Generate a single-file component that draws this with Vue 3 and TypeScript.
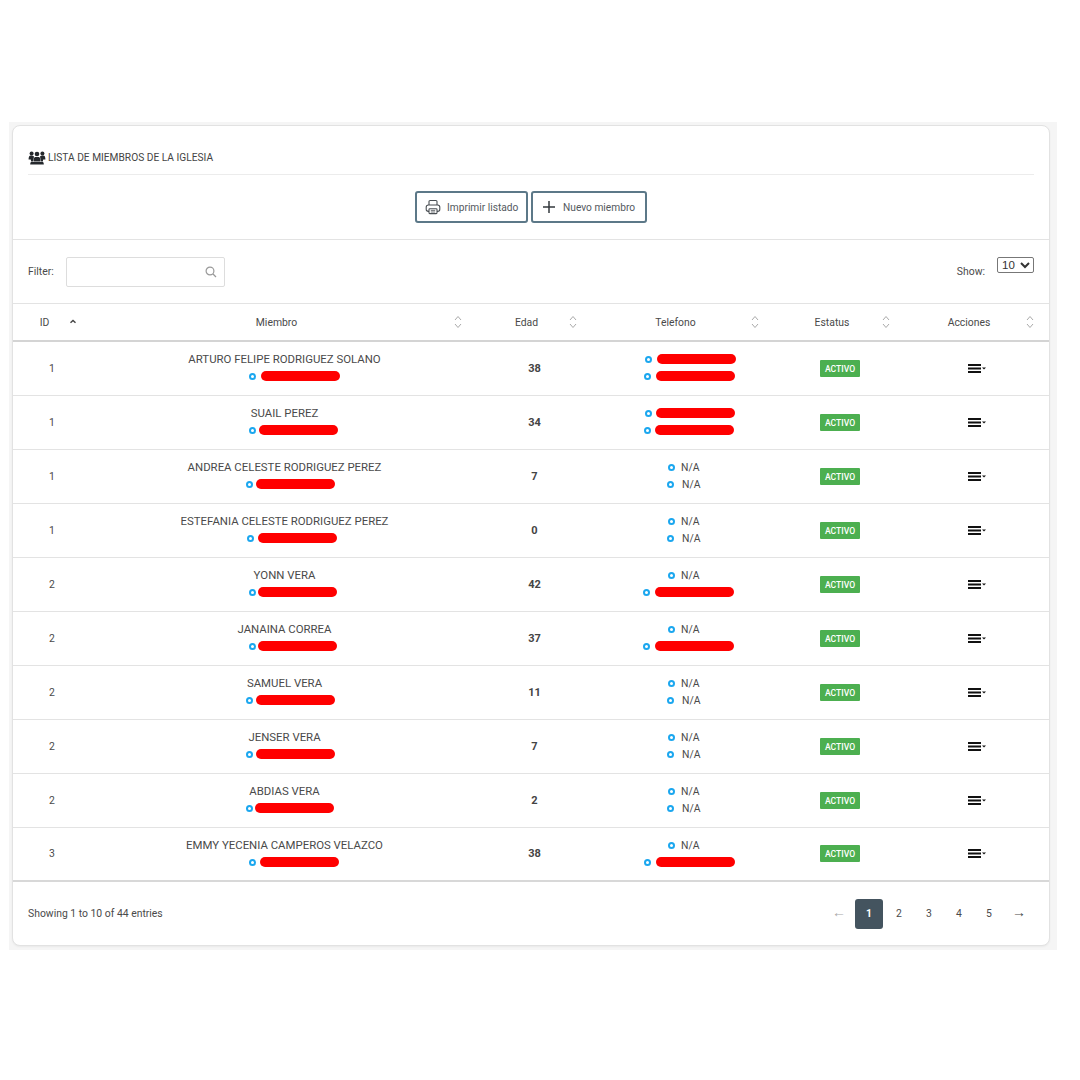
<script setup lang="ts">
interface Line { x: number; gap: number; text?: string }
interface Row { id: number; name: string; nameLine: Line; age: number; phones: Line[] }

const na1: Line = { x: 76, gap: 6, text: 'N/A' }
const na2: Line = { x: 75, gap: 8, text: 'N/A' }
const rows: Row[] = [
  { id: 1, name: 'ARTURO FELIPE RODRIGUEZ SOLANO', nameLine: { x: 157, gap: 5 }, age: 38, phones: [{ x: 53, gap: 5 }, { x: 52, gap: 5 }] },
  { id: 1, name: 'SUAIL PEREZ', nameLine: { x: 157, gap: 3 }, age: 34, phones: [{ x: 53, gap: 4 }, { x: 52, gap: 4 }] },
  { id: 1, name: 'ANDREA CELESTE RODRIGUEZ PEREZ', nameLine: { x: 154, gap: 3 }, age: 7, phones: [na1, na2] },
  { id: 1, name: 'ESTEFANIA CELESTE RODRIGUEZ PEREZ', nameLine: { x: 155, gap: 4 }, age: 0, phones: [na1, na2] },
  { id: 2, name: 'YONN VERA', nameLine: { x: 157, gap: 2 }, age: 42, phones: [na1, { x: 51, gap: 5 }] },
  { id: 2, name: 'JANAINA CORREA', nameLine: { x: 157, gap: 2 }, age: 37, phones: [na1, { x: 51, gap: 5 }] },
  { id: 2, name: 'SAMUEL VERA', nameLine: { x: 154, gap: 3 }, age: 11, phones: [na1, na2] },
  { id: 2, name: 'JENSER VERA', nameLine: { x: 154, gap: 3 }, age: 7, phones: [na1, na2] },
  { id: 2, name: 'ABDIAS VERA', nameLine: { x: 154, gap: 2 }, age: 2, phones: [na1, na2] },
  { id: 3, name: 'EMMY YECENIA CAMPEROS VELAZCO', nameLine: { x: 157, gap: 4 }, age: 38, phones: [na1, { x: 52, gap: 5 }] },
]
const columns = ['ID', 'Miembro', 'Edad', 'Telefono', 'Estatus', 'Acciones']
const pages = [1, 2, 3, 4, 5]
</script>

<template>
  <div class="backdrop">
    <section class="card">
      <header class="head">
        <h1 class="title">
          <svg class="group-icon" viewBox="0 0 18 14" width="18" height="14" fill="#24282c">
            <circle cx="3.6" cy="2.4" r="2" /><circle cx="14.4" cy="2.4" r="2" />
            <path d="M1.8 4.8C.9 5.4.6 6.6.6 8.6h2.2l.3 1.8h2L6 5.6C5.4 5 4.6 4.6 3.6 4.6c-.7 0-1.300.1-1.800.2z" />
            <path d="M16.200 4.800c.9.6 1.200 1.800 1.200 3.800h-2.200l-.3 1.800h-2L12 5.600c.6-.6 1.400-1 2.400-1 .7 0 1.300.1 1.800.2z" />
            <circle cx="9" cy="3" r="2.300" />
            <path d="M7 6h4c1 .5 1.400 1.800 1.500 4.600h-7C5.600 7.800 6 6.500 7 6z" />
            <path d="M3.500 11h11c.8 0 1.200.6 1.300 2.600H2.200C2.300 11.600 2.700 11 3.500 11z" />
          </svg>
          LISTA DE MIEMBROS DE LA IGLESIA
        </h1>
        <div class="actions">
          <button class="btn print" type="button">
            <svg viewBox="0 0 16 16" width="16" height="16" fill="none" stroke="#4a4f54" stroke-width="1.1">
              <path d="M4 6V2.600c0-.6.500-1.100 1.100-1.100h5.800c.6 0 1.100.5 1.100 1.100V6" />
              <rect x="1.200" y="6" width="13.600" height="6.400" rx="2.200" />
              <rect x="4" y="9.800" width="8" height="4.800" rx=".8" fill="#fff" />
              <path d="M5.800 11.400h4.400M5.800 13h4.400" stroke-width=".8" />
            </svg>
            <span>Imprimir listado</span>
          </button>
          <button class="btn add" type="button">
            <svg viewBox="0 0 14 14" width="14" height="14" stroke="#33383d" stroke-width="1.5">
              <path d="M7 1v12M1 7h12" />
            </svg>
            <span>Nuevo miembro</span>
          </button>
        </div>
      </header>

      <div class="controls">
        <label class="filter">
          <span>Filter:</span>
          <span class="search">
            <input type="text" aria-label="Filter" />
            <svg viewBox="0 0 12 12" width="12" height="12" fill="none" stroke="#999" stroke-width="1.2">
              <circle cx="5" cy="5" r="3.9" /><path d="M8 8l3 3" />
            </svg>
          </span>
        </label>
        <label class="show">
          <span>Show:</span>
          <select><option>10</option><option>25</option><option>50</option></select>
        </label>
      </div>

      <div class="grid thead">
        <div v-for="(col, i) in columns" :key="col" class="th">
          <span>{{ col }}</span>
          <svg v-if="i === 0" class="sort" viewBox="0 0 8 14" width="8" height="14" fill="none" stroke="#444" stroke-width="1.4">
            <path d="M1.5 7.8L4 5.4l2.5 2.4" />
          </svg>
          <svg v-else class="sort" viewBox="0 0 8 14" width="8" height="14" fill="none" stroke="#aaa" stroke-width="1">
            <path d="M1 5L4 1.5 7 5M1 9l3 3.5L7 9" />
          </svg>
        </div>
      </div>

      <div v-for="row in rows" :key="row.name" class="grid row">
        <div class="cell center id">{{ row.id }}</div>
        <div class="cell stack">
          <div class="name">{{ row.name }}</div>
          <div class="line" :style="{ paddingLeft: row.nameLine.x + 'px', gap: row.nameLine.gap + 'px' }">
            <i class="dot"></i><b class="blob"></b>
          </div>
        </div>
        <div class="cell center age">{{ row.age }}</div>
        <div class="cell stack">
          <div v-for="(p, i) in row.phones" :key="i" class="line" :style="{ paddingLeft: p.x + 'px', gap: p.gap + 'px' }">
            <i class="dot"></i>
            <span v-if="p.text">{{ p.text }}</span>
            <b v-else class="blob"></b>
          </div>
        </div>
        <div class="cell center"><span class="badge">ACTIVO</span></div>
        <div class="cell center">
          <svg viewBox="0 0 18 9" width="18" height="9" fill="#111">
            <path d="M0 0h13v2H0zM0 3.500h13v2H0zM0 7h13v2H0z" />
            <path d="M14 3.400h4l-2 2.200z" />
          </svg>
        </div>
      </div>

      <footer class="foot">
        <span>Showing 1 to 10 of 44 entries</span>
        <nav class="pager">
          <span class="page arrow muted">←</span>
          <span v-for="p in pages" :key="p" class="page" :class="{ active: p === 1 }">{{ p }}</span>
          <span class="page arrow">→</span>
        </nav>
      </footer>
    </section>
  </div>
</template>

<style>
html, body { background: #fff; margin: 0; }
</style>

<style scoped>
.backdrop {
  box-sizing: border-box;
  width: 1048px;
  height: 828px;
  margin: 122px 0 0 9px;
  padding: 3px 7px 4px 3px;
  background: #f5f5f5;
  font-family: Roboto, "Liberation Sans", sans-serif;
  font-size: 10.4px;
  color: #4a4a4a;
}
.card {
  box-sizing: border-box;
  height: 821px;
  background: #fff;
  border: 1px solid #e2e2e2;
  border-radius: 8px;
  box-shadow: 0 1px 2px rgba(0, 0, 0, 0.05);
  overflow: hidden;
}
.head {
  height: 114px;
  box-sizing: border-box;
  padding: 23px 15px 0;
  border-bottom: 1px solid #e3e3e3;
}
.title {
  display: flex;
  align-items: center;
  gap: 2px;
  height: 26px;
  box-sizing: border-box;
  margin: 0 0 16px;
  padding-bottom: 8px;
  border-bottom: 1px solid #ececec;
  font-size: 10.2px;
  font-weight: 400;
  color: #444;
}
.actions {
  display: flex;
  justify-content: center;
  gap: 3px;
}
.btn {
  display: flex;
  align-items: center;
  box-sizing: border-box;
  height: 32px;
  padding: 0;
  background: #fff;
  border: 2px solid #5c7888;
  border-radius: 3px;
  font: inherit;
  font-size: 10.2px;
  font-weight: 400;
  color: #54595e;
  white-space: nowrap;
}
.print { width: 113px; padding-left: 8px; gap: 6px; }
.add { width: 116px; padding-left: 9px; gap: 7px; }
.controls {
  box-sizing: border-box;
  height: 64px;
  display: flex;
  justify-content: space-between;
  padding: 17px 15px 0;
  border-bottom: 1px solid #e3e3e3;
}
.filter, .show { display: flex; align-items: flex-start; }
.filter > span:first-child { line-height: 30px; width: 38px; }
.search {
  position: relative;
  display: block;
  width: 159px;
  height: 30px;
}
.search input {
  box-sizing: border-box;
  width: 100%;
  height: 100%;
  border: 1px solid #ddd;
  border-radius: 2px;
  outline: none;
}
.search svg { position: absolute; right: 8px; top: 9px; }
.show > span { line-height: 30px; margin-right: 12px; }
.show select {
  width: 37px;
  height: 16px;
  padding: 0;
  font-family: "Liberation Sans", sans-serif;
  font-size: 11.5px;
  background: #fff;
  border: 1px solid #777;
  border-radius: 2px;
  color: #333;
}
.grid {
  display: grid;
  grid-template-columns: 79px 385px 115px 183px 130px 1fr;
}
.thead {
  box-sizing: border-box;
  height: 38px;
  border-bottom: 2px solid #d4d4d4;
}
.th {
  position: relative;
  display: flex;
  align-items: center;
  justify-content: center;
  padding-right: 16px;
}
.sort { position: absolute; right: 15px; top: 11px; }
.th:nth-child(4) .sort { right: 16px; }
.row {
  box-sizing: border-box;
  height: 54px;
  border-bottom: 1px solid #e3e3e3;
}
.row:last-of-type { border-bottom: 2px solid #d8d8d8; }
.cell { min-width: 0; }
.center {
  display: flex;
  align-items: center;
  justify-content: center;
  padding-bottom: 1px;
}
.id { padding-right: 1px; }
.stack { padding-top: 9px; }
.name {
  height: 17px;
  line-height: 17px;
  text-align: center;
  font-size: 11.4px;
}
.line {
  display: flex;
  align-items: center;
  height: 17px;
  line-height: 17px;
}
.dot {
  flex: none;
  box-sizing: border-box;
  width: 7px;
  height: 7px;
  border: 2px solid #1ba7ef;
  border-radius: 50%;
}
.blob {
  flex: none;
  width: 79px;
  height: 10px;
  margin-top: -1px;
  background: #f00;
  border-radius: 5px;
}
.age { font-size: 11px; font-weight: 700; color: #444; }
.badge {
  width: 40px;
  height: 17px;
  line-height: 18px;
  text-align: center;
  background: #4caf50;
  border-radius: 1px;
  color: #fff;
  font-size: 8.6px;
  font-weight: 500;
}
.foot {
  height: 63px;
  box-sizing: border-box;
  display: flex;
  justify-content: space-between;
  align-items: center;
  padding: 0 15px;
}
.pager { display: flex; gap: 2px; margin-right: 1px; }
.page {
  width: 28px;
  height: 30px;
  line-height: 30px;
  text-align: center;
  border-radius: 3px;
  color: #4a4a4a;
}
.arrow { font-family: "Liberation Sans", sans-serif; font-size: 14px; line-height: 27px; }
.page.muted { color: #aaa; }
.page.active { background: #44545f; color: #fff; font-weight: 700; }
</style>
